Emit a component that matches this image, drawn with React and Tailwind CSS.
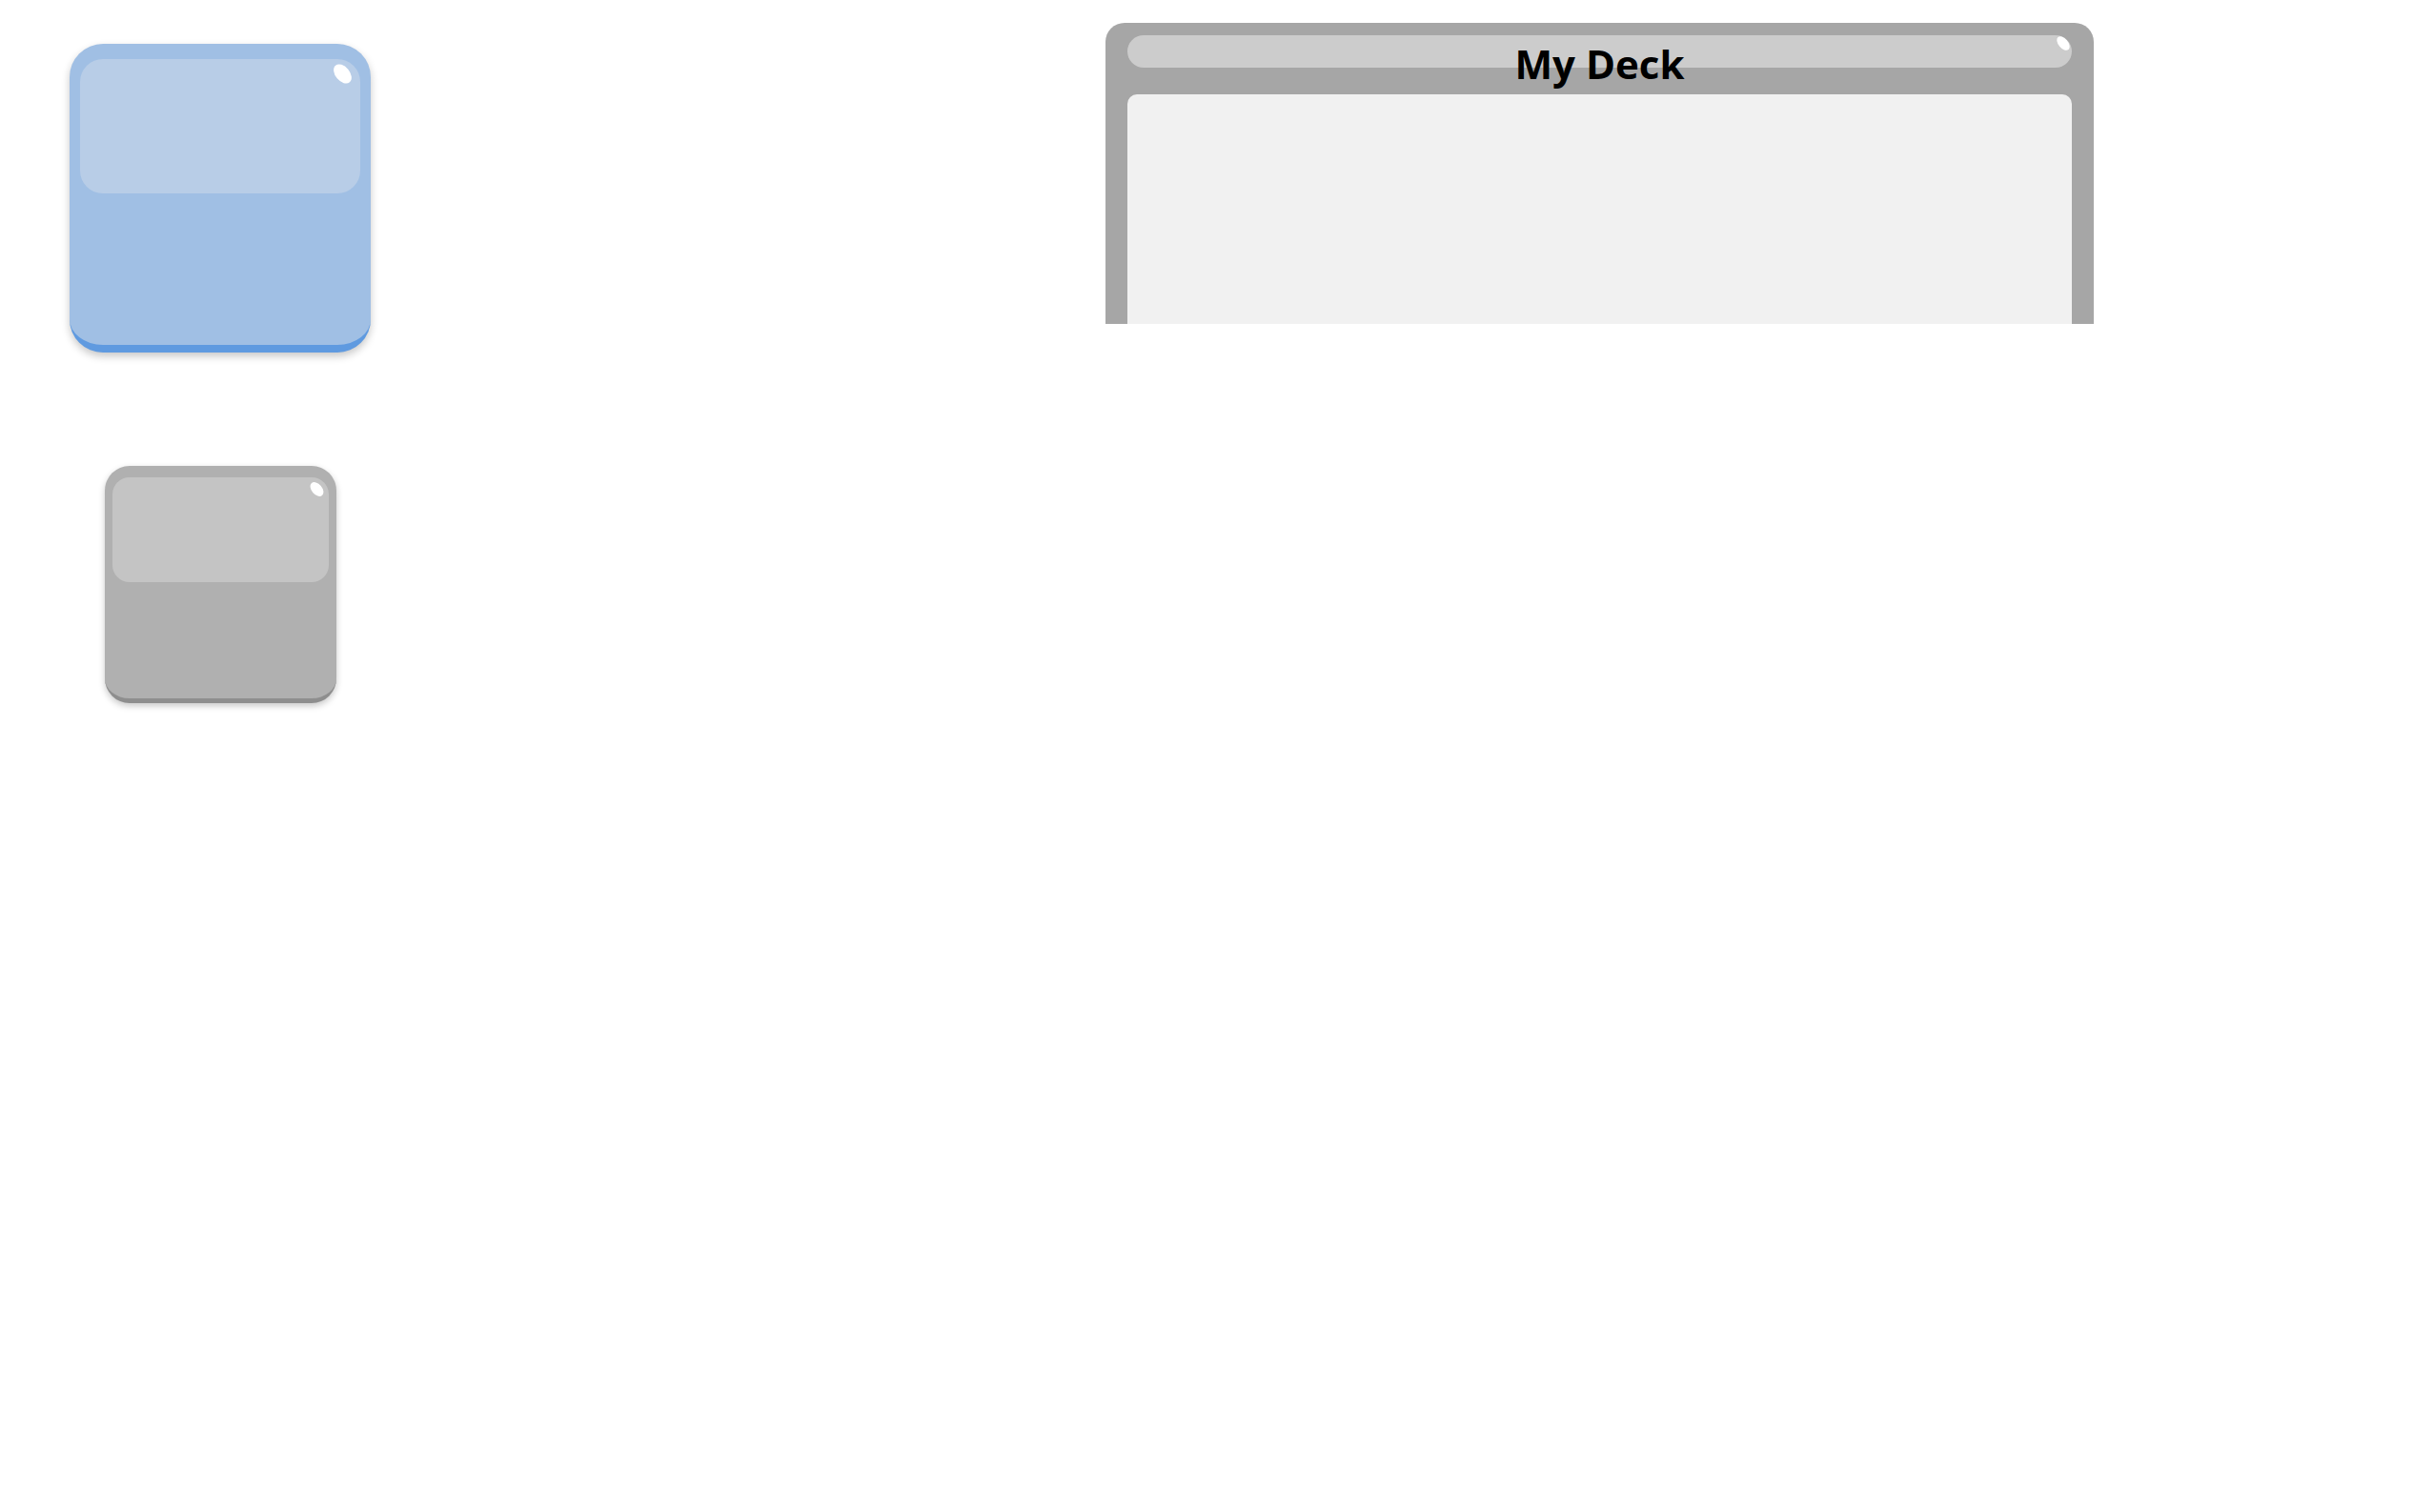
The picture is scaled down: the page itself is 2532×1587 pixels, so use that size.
import React from 'react';

// glossy square button, two sizes
function GlossButton({ size }) {
  const big = size === 'lg';
  return (
    <div
      className={
        big
          ? 'w-[316px] h-[324px] rounded-[35px] bg-[#a0bfe4] border-b-8 border-[#5f9ae0] px-[11px] pt-[16px] shadow-[0_4px_8px_rgba(0,0,0,0.22)]'
          : 'w-[243px] h-[249px] rounded-[26px] bg-[#b0b0b0] border-b-[5px] border-[#8e8e8e] px-[8px] pt-[12px] shadow-[0_3px_7px_rgba(0,0,0,0.22)]'
      }
    >
      <div
        className={
          big
            ? 'relative h-[141px] rounded-[24px] bg-[#b8cde7]'
            : 'relative h-[110px] rounded-[18px] bg-[#c4c4c4]'
        }
      >
        <span
          className={
            big
              ? 'absolute right-[11px] top-[4px] w-[15px] h-[23px] rounded-[50%] bg-white rotate-[-40deg]'
              : 'absolute right-[7px] top-[4px] w-[11px] h-[17px] rounded-[50%] bg-white rotate-[-40deg]'
          }
        />
      </div>
    </div>
  );
}

function DeckPanel() {
  return (
    <div className="w-[1037px] h-[316px] mt-[24px] ml-[698px] rounded-t-[20px] bg-[#a6a6a6] px-[23px] pt-[13px] overflow-hidden flex flex-col">
      {/* title bar */}
      <div className="relative h-[34px] shrink-0 rounded-full bg-[#cccccc] flex justify-center items-start">
        <div className="absolute inset-0 rounded-full overflow-hidden">
          <span className="absolute right-[4px] top-[0px] w-[10px] h-[17px] rounded-[50%] bg-white rotate-[-40deg]" />
        </div>
        <div className="relative mt-[9px] text-[42px] leading-none font-bold text-black font-['Open_Sans',sans-serif]">
          My Deck
        </div>
      </div>
      {/* deck content */}
      <div className="mt-[28px] flex-1 rounded-t-[10px] bg-[#f1f1f1]" />
    </div>
  );
}

export default function App() {
  return (
    <div className="w-[2532px] h-[1587px] bg-white flex items-start">
      <div className="w-[462px] shrink-0 pt-[46px] flex flex-col items-center gap-[119px]">
        <GlossButton size="lg" />
        <GlossButton size="sm" />
      </div>
      <DeckPanel />
    </div>
  );
}
